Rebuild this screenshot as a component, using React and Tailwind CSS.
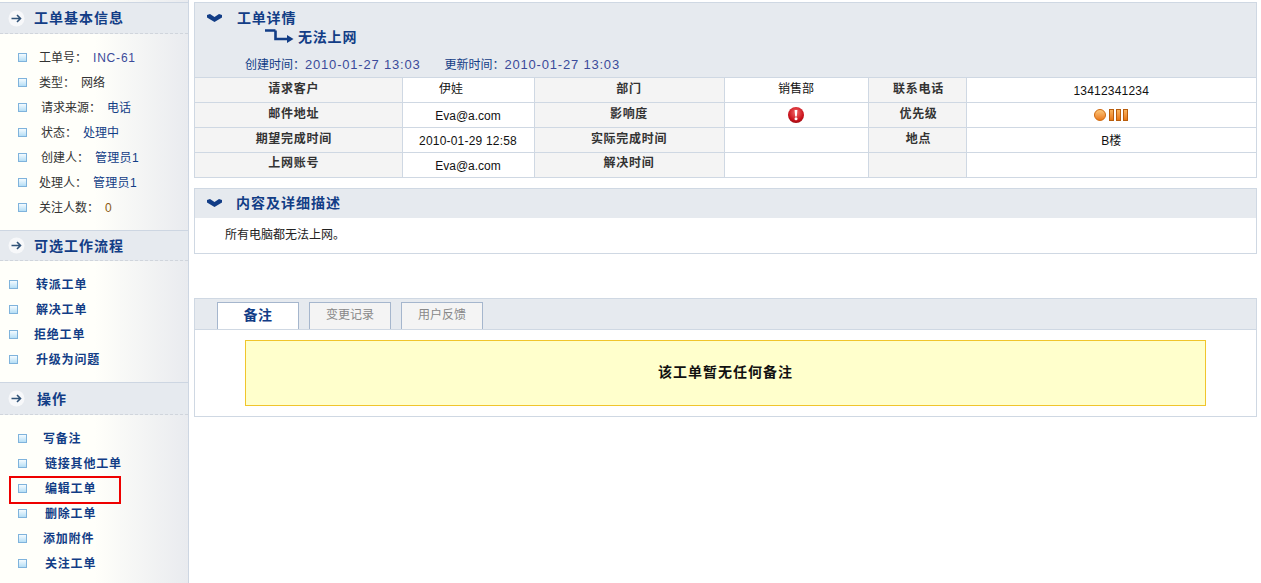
const basicInfo = [
  { label: '工单号：', value: 'INC-61', left: 'ml-[12px]', valueColor: 'text-[#3b4a9a] tracking-[0.8px]' },
  { label: '类型：', value: '网络', left: 'ml-[12px]', valueColor: 'text-[#333333]' },
  { label: '请求来源：', value: '电话', left: 'ml-[14px]', valueColor: 'text-[#123d86]' },
  { label: '状态：', value: '处理中', left: 'ml-[14px]', valueColor: 'text-[#123d86]' },
  { label: '创建人：', value: '管理员1', left: 'ml-[14px]', valueColor: 'text-[#123d86] tracking-[0.3px]' },
  { label: '处理人：', value: '管理员1', left: 'ml-[12px]', valueColor: 'text-[#123d86] tracking-[0.3px]' },
  { label: '关注人数：', value: '0', left: 'ml-[12px]', valueColor: 'text-[#8a5a10]' },
];

const workflow = [
  { text: '转派工单', left: 'ml-[18px]' },
  { text: '解决工单', left: 'ml-[18px]' },
  { text: '拒绝工单', left: 'ml-[16px]' },
  { text: '升级为问题', left: 'ml-[18px]' },
];

const actions = [
  { text: '写备注', left: 'ml-[16px]' },
  { text: '链接其他工单', left: 'ml-[18px]' },
  { text: '编辑工单', left: 'ml-[18px]', boxed: true },
  { text: '删除工单', left: 'ml-[18px]' },
  { text: '添加附件', left: 'ml-[16px]' },
  { text: '关注工单', left: 'ml-[18px]' },
];

function Bullet() {
  return (
    <span className="h-[9px] w-[9px] shrink-0 border border-[#7fb3dc] bg-gradient-to-b from-[#f4fbff] to-[#b5def5]" />
  );
}

function ArrowIcon() {
  return (
    <svg width="17" height="17" viewBox="0 0 17 17" className="shrink-0">
      <circle cx="8.5" cy="8.5" r="8" fill="#f7f8fa" />
      <path d="M3.5 8.5h9M9 5l3.5 3.5L9 12" fill="none" stroke="#2f5278" strokeWidth="1.6" />
    </svg>
  );
}

function Chevron() {
  return (
    <svg width="15" height="8" viewBox="0 0 15 8" className="shrink-0">
      <path d="M0 1L3 0L7.5 3L12 0L15 1V3.5L7.5 8L0 3.5z" fill="#123d86" />
    </svg>
  );
}

function SideHead({ title, height, titleClass }) {
  return (
    <div className="border-t border-[#cdd6e2]">
      <div className={`flex items-center border-b border-dashed border-[#d0d5dc] bg-[#e6eaef] pl-2 ${height}`}>
        <ArrowIcon />
        <span className={`text-sm font-bold tracking-[1px] text-[#123d86] ${titleClass}`}>{title}</span>
      </div>
    </div>
  );
}

function Sidebar() {
  return (
    <aside className="h-[583px] w-[189px] shrink-0 overflow-hidden border-r border-[#cdd6e2] bg-gradient-to-r from-[#fffffa] from-50% to-[#e9ebef] pt-[2px] text-xs">
      <SideHead title="工单基本信息" height="h-[31px]" titleClass="ml-[9px]" />
      <ul className="pt-[11px] pb-[10px]">
        {basicInfo.map((row) => (
          <li key={row.label} className="flex h-[25px] items-center pl-[18px]">
            <Bullet />
            <span className={`${row.left} text-[#333333]`}>{row.label}</span>
            <span className={`ml-[6px] ${row.valueColor}`}>{row.value}</span>
          </li>
        ))}
      </ul>
      <SideHead title="可选工作流程" height="h-[30px]" titleClass="ml-[9px]" />
      <ul className="pt-[11px] pb-[10px]">
        {workflow.map((row) => (
          <li key={row.text} className="flex h-[25px] items-center pl-[9px]">
            <Bullet />
            <span className={`${row.left} font-bold tracking-[0.8px] text-[#123d86]`}>{row.text}</span>
          </li>
        ))}
      </ul>
      <SideHead title="操作" height="h-[32px]" titleClass="ml-[12px]" />
      <ul className="pt-[11px]">
        {actions.map((row) => (
          <li key={row.text} className="relative flex h-[25px] items-center pl-[18px]">
            <Bullet />
            <span className={`${row.left} font-bold tracking-[0.8px] text-[#123d86]`}>{row.text}</span>
            {row.boxed && (
              <span className="absolute top-0 left-[9px] h-[28px] w-[112px] border-2 border-[#ee0000]" />
            )}
          </li>
        ))}
      </ul>
    </aside>
  );
}

function ImpactIcon() {
  return (
    <svg width="16" height="16" viewBox="0 0 16 16" className="mx-auto block">
      <defs>
        <radialGradient id="impactFill" cx="50%" cy="35%" r="70%">
          <stop offset="0%" stopColor="#f46a6a" />
          <stop offset="70%" stopColor="#c8101a" />
          <stop offset="100%" stopColor="#8f0d12" />
        </radialGradient>
      </defs>
      <circle cx="8" cy="8" r="8" fill="url(#impactFill)" />
      <path d="M6.6 3h2.8L8.8 9.6H7.2z" fill="#ffffff" />
      <circle cx="8" cy="11.8" r="1.5" fill="#ffffff" />
    </svg>
  );
}

function PriorityIcon() {
  return (
    <div className="flex items-center justify-center gap-[2px]">
      <span className="mr-[1px] h-[12px] w-[12px] rounded-full border border-[#d06a10] bg-gradient-to-b from-[#fbc678] to-[#ea7a14]" />
      {[0, 1, 2].map((i) => (
        <span key={i} className="h-[12px] w-[5px] border border-[#b85d0c] bg-gradient-to-b from-[#f9b35c] to-[#e8780f]" />
      ))}
    </div>
  );
}

const cellEdges = 'border border-[#cfd8e3] first:border-l-0 last:border-r-0 [tr:last-child_&]:border-b-0';

function Label({ children, className = '' }) {
  return (
    <td className={`${cellEdges} bg-[#f4f4f4] pb-[3px] text-center font-bold tracking-[0.7px] text-[#333333] ${className}`}>
      {children}
    </td>
  );
}

function Value({ children, className = 'pt-[2px]' }) {
  return (
    <td className={`${cellEdges} bg-white text-center text-[#111111] ${className}`}>{children}</td>
  );
}

function DetailTable() {
  return (
    <table className="w-full table-fixed border-collapse text-xs">
      <colgroup>
        <col className="w-[207px]" />
        <col className="w-[132px]" />
        <col className="w-[190px]" />
        <col className="w-[144px]" />
        <col className="w-[98px]" />
        <col />
      </colgroup>
      <tbody>
        <tr className="h-[25px]">
          <Label className="pr-[9px]">请求客户</Label>
          <Value className="pr-[34px] pb-[3px]">伊娃</Value>
          <Label>部门</Label>
          <Value className="pb-[3px]">销售部</Value>
          <Label className="pl-[3px]">联系电话</Label>
          <Value className="pt-[2px] tracking-[0.2px]">13412341234</Value>
        </tr>
        <tr className="h-[25px]">
          <Label className="pr-[9px]">邮件地址</Label>
          <Value className="pt-[2px] text-[#4a3f9f]">Eva@a.com</Value>
          <Label>影响度</Label>
          <Value className="">
            <ImpactIcon />
          </Value>
          <Label className="pl-[3px]">优先级</Label>
          <Value className="">
            <PriorityIcon />
          </Value>
        </tr>
        <tr className="h-[25px]">
          <Label className="pr-[9px]">期望完成时间</Label>
          <Value className="pt-[2px] tracking-[0.2px]">2010-01-29 12:58</Value>
          <Label>实际完成时间</Label>
          <Value />
          <Label className="pl-[3px]">地点</Label>
          <Value>B楼</Value>
        </tr>
        <tr className="h-[24px]">
          <Label className="pr-[9px]">上网账号</Label>
          <Value>Eva@a.com</Value>
          <Label>解决时间</Label>
          <Value />
          <Label />
          <Value />
        </tr>
      </tbody>
    </table>
  );
}

function Tabs() {
  const tabs = ['变更记录', '用户反馈'];
  return (
    <div className="flex h-[31px] items-end gap-[10px] border-b border-[#cfd8e3] bg-[#e6eaef] pl-[22px]">
      <div className="flex h-[27px] w-[82px] items-center justify-center border border-b-0 border-[#a5b6cd] bg-white pb-[2px] text-sm font-bold tracking-[0.5px] text-[#123d86]">
        备注
      </div>
      {tabs.map((tab) => (
        <div
          key={tab}
          className="flex h-[27px] w-[82px] items-center justify-center border border-b-0 border-[#a5b6cd] bg-[#f4f4f4] pb-[2px] text-xs text-[#888888]"
        >
          {tab}
        </div>
      ))}
    </div>
  );
}

export default function App() {
  return (
    <div className="flex h-[583px] w-[1261px] overflow-hidden bg-white font-['Liberation_Sans','Noto_Sans_CJK_SC',sans-serif]">
      <Sidebar />
      <main className="ml-[5px] w-[1063px] shrink-0 pt-[2px]">
        {/* Details */}
        <section className="border border-[#cfd8e3]">
          <div className="h-[74px] bg-[#e6eaef]">
            <div className="flex items-center pt-[7px] pl-[12px]">
              <Chevron />
              <span className="ml-[15px] text-sm leading-[16px] font-bold tracking-[0.8px] text-[#123d86]">工单详情</span>
            </div>
            <div className="flex items-center pl-[70px]">
              <svg width="29" height="15" viewBox="0 0 29 15">
                <path d="M0 1.5h10.5M10.5 1.5V10h13" fill="none" stroke="#123d86" strokeWidth="2.6" />
                <path d="M22 6l6.5 4-6.5 4z" fill="#123d86" />
              </svg>
              <span className="ml-[4px] pt-[1px] text-sm leading-[20px] font-bold tracking-[0.8px] text-[#123d86]">无法上网</span>
            </div>
            <div className="mt-[10px] flex pl-[50px] text-xs leading-[16px] text-[#123d86]">
              <span>创建时间：</span>
              <span className="text-[13px] tracking-[0.8px] text-[#3b4a9a]">2010-01-27 13:03</span>
              <span className="ml-[24px]">更新时间：</span>
              <span className="text-[13px] tracking-[0.8px] text-[#3b4a9a]">2010-01-27 13:03</span>
            </div>
          </div>
          <DetailTable />
        </section>

        {/* Description */}
        <section className="mt-[10px] h-[66px] border border-[#cfd8e3]">
          <div className="flex h-[29px] items-center bg-[#e6eaef] pl-[12px]">
            <Chevron />
            <span className="ml-[14px] text-sm font-bold tracking-[1px] text-[#123d86]">内容及详细描述</span>
          </div>
          <p className="pt-[9px] pl-[30px] text-xs leading-[16px] text-[#222222]">所有电脑都无法上网。</p>
        </section>

        {/* Notes */}
        <section className="mt-[44px] h-[119px] border border-[#cfd8e3]">
          <Tabs />
          <div className="mt-[10px] ml-[50px] flex h-[66px] w-[961px] items-center justify-center border border-[#f0c52c] bg-[#ffffcc] pb-[2px] text-sm font-bold tracking-[1px] text-[#111111]">
            该工单暂无任何备注
          </div>
        </section>
      </main>
    </div>
  );
}
